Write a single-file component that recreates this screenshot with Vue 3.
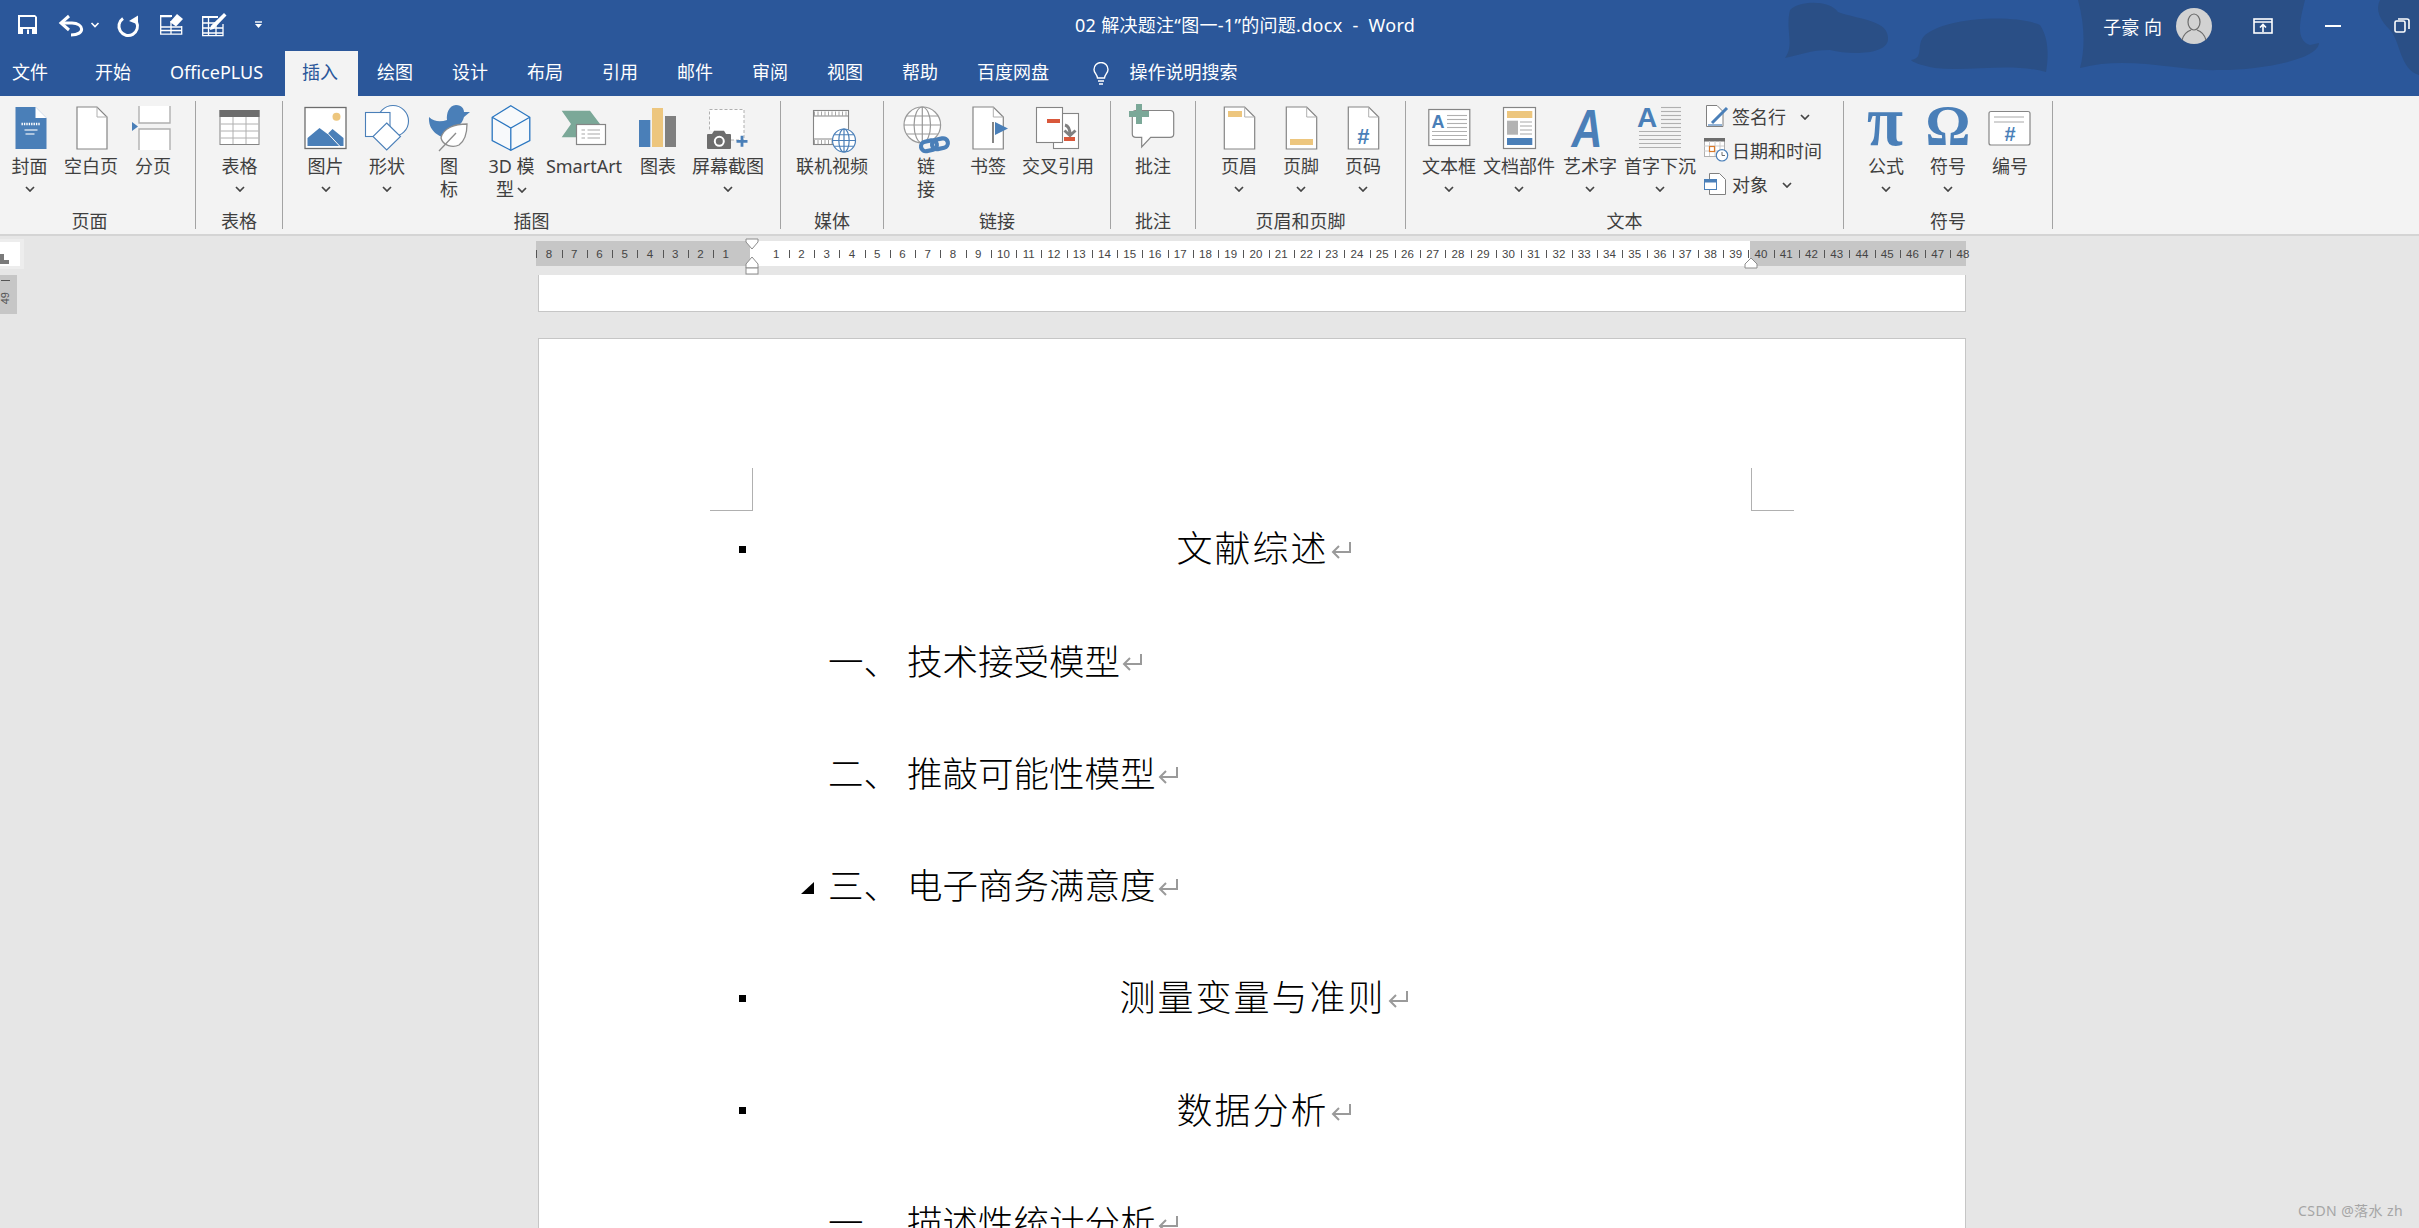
<template>
  <div class="word">
    <!-- Title bar and tabs -->
    <header class="top">
      <svg class="clouds" viewBox="0 0 2419 96" width="2419" height="96">
        <path d="M1790 10C1800 0 1830 0 1838 12C1860 20 1890 20 1888 40C1886 55 1850 55 1830 50C1810 50 1800 55 1785 58C1795 45 1785 30 1790 10Z" />
        <path d="M1925 35C1950 15 2020 15 2040 25C2050 40 2048 60 2046 72C2010 62 1970 72 1935 68C1920 65 1912 62 1911 60C1925 58 1915 45 1925 35Z" />
        <path d="M2078 0H2305C2300 20 2295 40 2310 45L2319 43C2318 60 2260 70 2220 70C2180 72 2130 55 2080 68C2085 50 2085 25 2078 0Z" />
        <path d="M2380 0H2419V75C2400 70 2400 40 2390 30C2380 20 2375 10 2380 0Z" />
      </svg>
      <div class="titlebar">
        <svg class="qat" viewBox="0 0 280 51" width="280" height="51" fill="none" stroke="#fff">
          <path d="M18 15H35L37 17V34H18Z" fill="#fff" stroke="none" />
          <rect x="20" y="17" width="15" height="10" fill="#2b579a" stroke="none" />
          <rect x="23" y="29" width="9" height="5" fill="#2b579a" stroke="none" />
          <rect x="27" y="29.5" width="2" height="4.5" fill="#fff" stroke="none" />
          <path d="M61 23H72C84 23 86 35 71 35" stroke-width="3" />
          <path d="M69 16L61 23L69 30" stroke-width="3" />
          <path d="M91.5 23L95 26.5L98.5 23" stroke-width="1.6" />
          <path d="M123 18.5A9.3 9.3 0 1 0 136.5 22" stroke-width="3" />
          <path d="M129 21L138 15.5V24.5Z" fill="#fff" stroke="none" />
          <path d="M160.7 16.5H171M160.7 16.5V34.2H181.7V26M160.7 27H181.7M160.7 30.5H181.7M171 21V34" stroke-width="1.3" />
          <path d="M160 15H172V17H160Z" fill="#fff" stroke="none" />
          <path d="M170 22L177 14L183 19L176 26.5Z" fill="#fff" stroke="none" />
          <path d="M202.7 17V35.7H223V24M202.7 23H216M202.7 28H223M202.7 33H223M208.5 18V35M216 23V35" stroke-width="1.3" />
          <path d="M202 16H218V18H202Z" fill="#fff" stroke="none" />
          <path d="M210 30L210.8 26L224 13L226.5 15.5L213.5 29Z" fill="#fff" stroke="none" />
          <path d="M255 22H262" stroke-width="1.4" />
          <path d="M255 24H262L258.5 28Z" fill="#fff" stroke="none" />
        </svg>
        <div class="doc-title">02 解决题注“图一-1”的问题.docx&nbsp; - &nbsp;Word</div>
        <div class="account">
          <span class="user">子豪 向</span>
          <svg class="avatar" viewBox="0 0 36 36" width="36" height="36">
            <circle cx="18" cy="18" r="18" fill="#d2d2d2" />
            <ellipse cx="18" cy="14" rx="6" ry="8" fill="none" stroke="#6d6d6d" stroke-width="1.2" />
            <path d="M6 32C8 25 12 23 15 22M30 32C28 25 24 23 21 22" fill="none" stroke="#6d6d6d" stroke-width="1.2" />
          </svg>
          <svg class="win win-display" viewBox="0 0 20 16" width="20" height="16" fill="none" stroke="#fff" stroke-width="1.6">
            <rect x="1" y="1" width="18" height="14" />
            <path d="M1 4H19M10 14V7M7 9.5L10 6.5L13 9.5" />
          </svg>
          <span class="win-min"></span>
          <svg class="win win-restore" viewBox="0 0 16 15" width="16" height="15" fill="none" stroke="#fff" stroke-width="1.6">
            <rect x="1" y="3" width="10" height="11" rx="1.5" />
            <path d="M4 1H13C14.5 1 15 2 15 3V11" />
          </svg>
        </div>
      </div>
      <nav class="tabs">
        <span v-for="t in tabs" :key="t" class="tab" :class="{ active: t === '插入', first: t === '文件' }">{{ t }}</span>
        <svg class="bulb" viewBox="0 0 20 24" width="20" height="24" fill="none" stroke="#fff" stroke-width="1.4">
          <path d="M6.5 16C6 12 3 11 3 7.5A7 7 0 0 1 17 7.5C17 11 14 12 13.5 16Z" />
          <path d="M7 19H13M8 22H12" />
        </svg>
        <span class="search">操作说明搜索</span>
      </nav>
    </header>

    <!-- Ribbon -->
    <section class="ribbon">
      <div
        v-for="g in layoutGroups"
        :key="g.name"
        class="group"
        :style="{ width: g.width + 'px' }"
      >
        <div class="btns">
          <div
            v-for="b in g.btns"
            :key="b.icon"
            class="btn"
            :style="{ width: b.w + 'px', marginLeft: b.ml + 'px' }"
          >
            <svg class="icon" :viewBox="`${b.cx - 34} 103 68 52`" width="68" height="52" v-html="icons[b.icon]"></svg>
            <div class="label">
              <div v-for="(line, i) in b.label" :key="i">
                {{ line }}<svg v-if="b.drop === 'inline' && i === b.label.length - 1" class="chev inline" viewBox="0 0 10 6" width="10" height="6"><path d="M1 1L5 5L9 1" /></svg>
              </div>
              <div v-if="b.drop === 'below'" class="chev-row">
                <svg class="chev" viewBox="0 0 10 6" width="10" height="6"><path d="M1 1L5 5L9 1" /></svg>
              </div>
            </div>
          </div>
          <div v-if="g.small" class="small-col">
            <div v-for="s in g.small" :key="s.text" class="small-row">
              <svg :viewBox="s.box" width="26" height="26" v-html="icons[s.icon]"></svg>
              <span class="small-text">{{ s.text }}</span>
              <svg v-if="s.gap" class="chev" :style="{ marginLeft: s.gap + 'px' }" viewBox="0 0 10 6" width="10" height="6"><path d="M1 1L5 5L9 1" /></svg>
            </div>
          </div>
        </div>
        <div class="group-label" :class="{ shift: g.name === '页面' }">{{ g.name }}</div>
      </div>
    </section>

    <!-- Document area -->
    <main class="workspace">
      <div class="corner">
        <span class="corner-in"><i class="tabstop-v"></i><i class="tabstop-h"></i></span>
      </div>
      <div class="vruler"><i class="vtick"></i><span class="vnum">49</span></div>

      <div class="ruler">
        <div class="ruler-dark left"></div>
        <div class="ruler-light"></div>
        <div class="ruler-dark right"></div>
        <span v-for="n in rulerNums" :key="n.key" class="rnum" :style="{ left: n.x + 'px' }">{{ n.text }}</span>
        <i v-for="x in rulerTicks" :key="x" class="rtick" :style="{ left: x + 'px' }"></i>
        <svg class="indent" viewBox="0 0 14 37" width="14" height="37" fill="#fff" stroke="#8c8c8c">
          <path d="M1 1H13V4L7 11L1 4Z" />
          <path d="M7 19L13 26V30H1V26Z" />
          <rect x="1" y="30" width="12" height="6" />
        </svg>
        <svg class="indent-r" viewBox="0 0 14 12" width="14" height="12" fill="#fff" stroke="#8c8c8c">
          <path d="M7 1L13 7V11H1V7Z" />
        </svg>
      </div>

      <div class="page-end"></div>

      <article class="page">
        <i class="crop crop-l"></i>
        <i class="crop crop-r"></i>
        <div v-for="(p, i) in paragraphs" :key="i" class="para" :class="p.center ? 'centered' : 'indented'">
          <i v-if="p.center" class="bullet"></i>
          <i v-if="p.tri" class="tri"></i>
          <span v-if="p.num" class="para-num">{{ p.num }}</span>
          <span class="para-text">{{ p.text }}</span>
          <svg class="pilcrow" viewBox="0 0 22 18" width="22" height="18" fill="none" stroke="#9a9a9a" stroke-width="2">
            <path d="M20 1V11H3M9 5L3 11L9 17" />
          </svg>
        </div>
      </article>

      <div class="watermark">CSDN @落水 zh</div>
    </main>
  </div>
</template>

<script setup>
const tabs = ['文件', '开始', 'OfficePLUS', '插入', '绘图', '设计', '布局', '引用', '邮件', '审阅', '视图', '帮助', '百度网盘']

// ── Icon colours ───────────────────────────────────────
const BLUE = '#4a7fb8'
const GRAY = '#858585'
const LINE = '#b0b0b0'
const DARK = '#6d6d6d'
const YEL = '#edc67e'
const GRN = '#7ba898'
const RED = '#d9583b'

function sheet(x, y, w, h) {
  const f = 10
  return `<path d="M${x} ${y}H${x + w - f}L${x + w} ${y + f}V${y + h}H${x}Z" fill="#fff" stroke="${GRAY}" stroke-width="1.2"/>` +
    `<path d="M${x + w - f} ${y}V${y + f}H${x + w}" fill="none" stroke="${LINE}"/>`
}
function hlines(x1, x2, ys, color = LINE) {
  return ys.map(y => `<path d="M${x1} ${y}H${x2}" stroke="${color}" stroke-width="1.1"/>`).join('')
}
function globe(cx, cy, rx, ry, color) {
  return `<g fill="#fff" stroke="${color}" stroke-width="1.2"><ellipse cx="${cx}" cy="${cy}" rx="${rx}" ry="${ry}"/>` +
    `<ellipse cx="${cx}" cy="${cy}" rx="${rx * 0.45}" ry="${ry}" fill="none"/>` +
    `<path d="M${cx} ${cy - ry}V${cy + ry}M${cx - rx} ${cy}H${cx + rx}M${cx - rx * 0.85} ${cy - ry * 0.5}H${cx + rx * 0.85}M${cx - rx * 0.85} ${cy + ry * 0.5}H${cx + rx * 0.85}" fill="none"/></g>`
}

const icons = {
  cover: `<path d="M15 107H35L46 118V149H15Z" fill="${BLUE}"/><path d="M35 107L46 118H35Z" fill="#fff"/>` +
    `<path d="M21 124H40" stroke="#fff" stroke-width="2.4" stroke-dasharray="1.4 1"/>` + hlines(24, 37, [130], '#fff') + hlines(25, 34, [134], '#fff'),
  blank: sheet(77, 107, 30, 42),
  pagebreak: `<path d="M139 106V123H170V106" fill="#fff" stroke="${LINE}" stroke-width="1.4"/><path d="M139 150V129H170V150" fill="#fff" stroke="${LINE}" stroke-width="1.4"/><path d="M132 122L138 126.5L132 131Z" fill="${BLUE}"/>`,
  table: `<rect x="219.5" y="110.5" width="39" height="34" fill="#fff" stroke="${GRAY}"/><rect x="219" y="110" width="40" height="7" fill="${DARK}"/>` +
    `<path d="M232.5 117V144M245.5 117V144M220 124H258M220 131H258M220 138H258" stroke="${LINE}"/>`,
  picture: `<rect x="304.5" y="107.5" width="41" height="41" fill="#fff" stroke="${DARK}" stroke-width="1.3"/><circle cx="336" cy="116.7" r="4" fill="${YEL}"/>` +
    `<path d="M307 146V138L319 128L327 134L332 129L343 138V146Z" fill="${BLUE}"/><path d="M326 132L340 147" stroke="#fff"/>`,
  shape: `<g fill="#fff" stroke="${BLUE}" stroke-width="1.1"><circle cx="393" cy="121" r="15.5"/><rect x="365.5" y="112.5" width="24.5" height="24"/><path d="M386.7 123L400.5 136.5L386.7 150L373 136.5Z"/></g>`,
  bird: `<path d="M429 117C434 122 441 122 447 120C446 114 449 105 456 105C462 105 464 109 464 112L470 112L464 117C463 121 461 124 458 126L447 138C438 137 428 130 429 117Z" fill="${BLUE}"/>` +
    `<path d="M467 124C455 124 443 128 441 138C443 146 453 148 459 145C466 140 467 132 467 124Z" fill="#fff" stroke="#8c8c8c" stroke-width="1.3"/><path d="M439 151L456 133" stroke="#8c8c8c" stroke-width="1.3"/>`,
  model: `<path d="M510.3 105.7L529.3 117.3V140.7L510.3 150.3L491.7 140.7V117.3Z" fill="#f7f9fb" stroke="#2a76c0" stroke-width="1.3"/><path d="M491.7 117.3L510.3 128L529.3 117.3M510.3 128V150.3" fill="none" stroke="#2a76c0" stroke-width="1.3"/>`,
  smartart: `<path d="M561.7 110.7H590L600 124L590 137.3H561.7L571 124Z" fill="${GRN}"/><rect x="576.5" y="124.5" width="29" height="20" fill="#fff" stroke="${GRAY}" stroke-width="1.2"/>` +
    hlines(581.5, 585, [130, 134, 138]) + hlines(587.5, 600, [130, 134, 138]),
  chart: `<rect x="639" y="120" width="11.3" height="27" fill="${BLUE}"/><rect x="652" y="108" width="11" height="39" fill="${YEL}"/><rect x="665" y="116" width="11" height="31" fill="#7f7f7f"/>`,
  screenshot: `<path d="M731 140H744V109.5H709.5V130" fill="#fff" stroke="${LINE}" stroke-dasharray="3 2"/>` +
    `<path d="M708 134H712L714 130.7H724L726 134H730Q731 134 731 135V148Q731 149 730 149H708Q707 149 707 148V135Q707 134 708 134Z" fill="${DARK}"/><circle cx="719.3" cy="141.3" r="4.5" fill="none" stroke="#fff" stroke-width="2"/><path d="M742 135.8V146.8M736.5 141.3H747.5" stroke="${BLUE}" stroke-width="2.8"/>`,
  video: `<rect x="813.5" y="110.5" width="35" height="34" fill="#fff" stroke="${GRAY}" stroke-width="1.1"/><path d="M814 116H848M814 139H848" stroke="${GRAY}"/><path d="M814 113.5H848M814 142H848" stroke="${DARK}" stroke-width="4" stroke-dasharray="1 2.5" opacity=".6"/>` + globe(844, 140.5, 11.5, 11.5, BLUE),
  link: globe(922.3, 125, 18.3, 18, '#999') + `<g fill="none" stroke="${BLUE}" stroke-width="4.2"><rect x="921" y="141" width="16" height="9.5" rx="4.7" transform="rotate(-12 929 146)"/><rect x="932" y="139" width="16" height="9.5" rx="4.7" transform="rotate(-12 940 144)"/></g>`,
  bookmark: sheet(973, 107, 30.3, 42) + `<path d="M993 122V143" stroke="${GRAY}" stroke-width="2"/><path d="M995 122L1008 128.5L995 135Z" fill="${BLUE}"/>`,
  crossref: `<rect x="1053.5" y="113.5" width="25" height="35" fill="#fff" stroke="${GRAY}" stroke-width="1.1"/><rect x="1036.5" y="107.5" width="26" height="35" fill="#fff" stroke="${GRAY}" stroke-width="1.1"/>` +
    `<rect x="1047" y="119" width="13" height="4" fill="${RED}"/><rect x="1064" y="137" width="11" height="4" fill="${RED}"/><path d="M1065 125C1069 126 1070 129 1070 135M1064.5 130.5L1070 135.5L1075.5 130.5" fill="none" stroke="#808080" stroke-width="3"/>`,
  comment: `<path d="M1136 110.5H1170Q1173.7 110.5 1173.7 114V134Q1173.7 137.3 1170 137.3H1150.7L1141.7 147V137.3H1136Q1132.3 137.3 1132.3 134V114Q1132.3 110.5 1136 110.5Z" fill="#fff" stroke="${GRAY}" stroke-width="1.2"/><path d="M1139 104V124M1129 114H1149" stroke="${GRN}" stroke-width="6"/>`,
  header: sheet(1224.3, 107, 30.4, 42) + `<rect x="1228" y="111" width="14" height="6" fill="${YEL}"/>`,
  footer: sheet(1286.3, 107, 30.4, 42) + `<rect x="1290" y="139" width="23" height="6" fill="${YEL}"/>`,
  pagenum: sheet(1348.3, 107, 30.4, 42) + `<text x="1363.3" y="143.5" text-anchor="middle" font-size="22" font-weight="700" font-family="Liberation Sans" fill="${BLUE}">#</text>`,
  textbox: `<rect x="1428.8" y="109.5" width="41" height="36" fill="#fff" stroke="${GRAY}" stroke-width="1.2"/><text x="1438" y="128" text-anchor="middle" font-size="18" font-weight="700" font-family="Liberation Sans" fill="${BLUE}">A</text>` + hlines(1447, 1467, [115.5, 119.5, 123.5, 127.5]) + hlines(1432, 1467, [131.5, 135.5, 139.5]),
  docparts: `<rect x="1503.5" y="107.5" width="32" height="41" fill="#fff" stroke="${GRAY}" stroke-width="1.2"/><rect x="1507" y="111" width="25.3" height="7" fill="${YEL}"/><rect x="1507" y="120.7" width="11" height="14" fill="#b3b3b3"/><rect x="1507" y="138" width="25.3" height="7" fill="${BLUE}"/>` + hlines(1520, 1532, [122, 126, 130, 134]),
  wordart: `<text x="1587" y="147" text-anchor="middle" font-size="53" font-weight="700" font-style="italic" textLength="31" lengthAdjust="spacingAndGlyphs" font-family="Liberation Sans" fill="${BLUE}">A</text>`,
  dropcap: `<text x="1647" y="127.3" text-anchor="middle" font-size="28" font-weight="700" font-family="Liberation Sans" fill="${BLUE}">A</text>` + hlines(1661, 1681, [107.5, 111.5, 115.5, 119.5, 123.5, 127.5]) + hlines(1639, 1681, [131.5, 135.5, 139.5, 143.5, 147.5]),
  sign: `<path d="M1706.5 105.5H1717L1723 111.5V126.5H1706.5Z" fill="#fff" stroke="#808080"/><path d="M1712 123L1727 108" stroke="${BLUE}" stroke-width="3"/><path d="M1708 125H1722" stroke="${BLUE}" stroke-width="1.2"/>`,
  date: `<rect x="1704.5" y="138.5" width="20" height="18" fill="#fff" stroke="${LINE}"/><rect x="1704" y="138" width="21" height="3.5" fill="${DARK}"/><path d="M1709.5 141V156M1715 141V156M1720 141V156M1704 146H1724M1704 151H1724" stroke="#ccc"/><rect x="1709.5" y="146.5" width="5" height="5" fill="#fff" stroke="#d97a2b" stroke-width="1.2"/><circle cx="1722" cy="155.3" r="5.7" fill="#fff" stroke="${BLUE}" stroke-width="1.2"/><path d="M1722 152V155.5H1725" fill="none" stroke="${DARK}"/>`,
  object: `<path d="M1709.5 173.5H1719.5L1725.5 179.5V194.5H1709.5Z" fill="#fff" stroke="#808080"/><rect x="1704.5" y="179.5" width="12" height="10" fill="#fff" stroke="${BLUE}"/><rect x="1704" y="179" width="13" height="3.5" fill="${BLUE}"/>`,
  formula: `<text x="1885" y="145" text-anchor="middle" font-size="72" textLength="36" lengthAdjust="spacingAndGlyphs" font-family="Liberation Serif" font-weight="700" fill="${BLUE}">π</text>`,
  symbol: `<text x="1948" y="145" text-anchor="middle" font-size="56" font-family="Liberation Serif" font-weight="700" fill="${BLUE}">Ω</text>`,
  number: `<rect x="1989" y="111.5" width="41" height="33.5" rx="2" fill="#fff" stroke="${GRAY}" stroke-width="1.2"/>` + hlines(1994, 2024, [117, 122]) + `<text x="2010" y="141" text-anchor="middle" font-size="20" font-weight="700" font-family="Liberation Sans" fill="${BLUE}">#</text>`,
}

// ── Ribbon data ────────────────────────────────────────
const groups = [
  { name: '页面', end: 196, btns: [
    { cx: 29.5, w: 60, label: ['封面'], drop: 'below', icon: 'cover' },
    { cx: 91, w: 60, label: ['空白页'], icon: 'blank' },
    { cx: 153, w: 60, label: ['分页'], icon: 'pagebreak' },
  ] },
  { name: '表格', end: 283, btns: [{ cx: 239.5, w: 60, label: ['表格'], drop: 'below', icon: 'table' }] },
  { name: '插图', end: 781, btns: [
    { cx: 325.5, w: 60, label: ['图片'], drop: 'below', icon: 'picture' },
    { cx: 387, w: 60, label: ['形状'], drop: 'below', icon: 'shape' },
    { cx: 449, w: 40, label: ['图', '标'], icon: 'bird' },
    { cx: 511.5, w: 52, label: ['3D 模', '型'], drop: 'inline', icon: 'model' },
    { cx: 584, w: 78, label: ['SmartArt'], icon: 'smartart' },
    { cx: 658, w: 60, label: ['图表'], icon: 'chart' },
    { cx: 728, w: 76, label: ['屏幕截图'], drop: 'below', icon: 'screenshot' },
  ] },
  { name: '媒体', end: 884, btns: [{ cx: 832, w: 76, label: ['联机视频'], icon: 'video' }] },
  { name: '链接', end: 1111, btns: [
    { cx: 926, w: 40, label: ['链', '接'], icon: 'link' },
    { cx: 988, w: 60, label: ['书签'], icon: 'bookmark' },
    { cx: 1058, w: 76, label: ['交叉引用'], icon: 'crossref' },
  ] },
  { name: '批注', end: 1196, btns: [{ cx: 1153, w: 60, label: ['批注'], icon: 'comment' }] },
  { name: '页眉和页脚', end: 1406, btns: [
    { cx: 1239, w: 60, label: ['页眉'], drop: 'below', icon: 'header' },
    { cx: 1301, w: 60, label: ['页脚'], drop: 'below', icon: 'footer' },
    { cx: 1363, w: 60, label: ['页码'], drop: 'below', icon: 'pagenum' },
  ] },
  { name: '文本', end: 1844, btns: [
    { cx: 1449, w: 56, label: ['文本框'], drop: 'below', icon: 'textbox' },
    { cx: 1519, w: 74, label: ['文档部件'], drop: 'below', icon: 'docparts' },
    { cx: 1590, w: 56, label: ['艺术字'], drop: 'below', icon: 'wordart' },
    { cx: 1660, w: 74, label: ['首字下沉'], drop: 'below', icon: 'dropcap' },
  ], small: [
    { text: '签名行', icon: 'sign', box: '1703 104 26 26', gap: 14 },
    { text: '日期和时间', icon: 'date', box: '1703 138 26 26' },
    { text: '对象', icon: 'object', box: '1703 172 26 26', gap: 14 },
  ] },
  { name: '符号', end: 2053, btns: [
    { cx: 1886, w: 60, label: ['公式'], drop: 'below', icon: 'formula' },
    { cx: 1948, w: 60, label: ['符号'], drop: 'below', icon: 'symbol' },
    { cx: 2010, w: 60, label: ['编号'], icon: 'number' },
  ] },
]

let groupStart = 0
const layoutGroups = groups.map(g => {
  let right = groupStart
  const btns = g.btns.map(b => {
    const left = b.cx - b.w / 2
    const ml = left - right
    right = left + b.w
    return { ...b, ml }
  })
  const out = { ...g, btns, width: g.end - groupStart }
  groupStart = g.end
  return out
})

// ── Ruler ──────────────────────────────────────────────
const ZERO = 215
const UNIT = 25.25
const rulerNums = []
const rulerTicks = []
for (let n = 8; n >= 1; n--) rulerNums.push({ key: 'l' + n, text: n, x: ZERO - n * UNIT })
for (let n = 1; n <= 48; n++) rulerNums.push({ key: 'r' + n, text: n, x: ZERO + n * UNIT })
for (let n = -9; n <= 47; n++) {
  if (n !== -1 && n !== 0) rulerTicks.push(ZERO + (n + 0.5) * UNIT)
}

// ── Document ───────────────────────────────────────────
const paragraphs = [
  { text: '文献综述', center: true },
  { num: '一、', text: '技术接受模型' },
  { num: '二、', text: '推敲可能性模型' },
  { num: '三、', text: '电子商务满意度', tri: true },
  { text: '测量变量与准则', center: true },
  { text: '数据分析', center: true },
  { num: '一、', text: '描述性统计分析' },
]
</script>

<style scoped>
.word {
  width: 2419px;
  height: 1228px;
  overflow: hidden;
  font-family: "Noto Sans", "Noto Sans CJK SC", sans-serif;
  font-size: 18px;
  color: #3f3f3f;
  background: #e6e6e6;
  display: flex;
  flex-direction: column;
}

/* title bar */
.top {
  position: relative;
  height: 96px;
  background: #2b579a;
  color: #fff;
  flex: none;
}
.clouds {
  position: absolute;
  left: 0;
  top: 0;
  fill: #2a4f86;
}
.titlebar {
  position: relative;
  height: 51px;
  display: flex;
  align-items: center;
}
.qat {
  width: 280px;
  flex: none;
}
.doc-title {
  margin-left: 795px;
  line-height: 51px;
  letter-spacing: 0.3px;
  white-space: nowrap;
}
.account {
  margin-left: auto;
  display: flex;
  align-items: center;
  padding-right: 9px;
}
.user { margin-right: 14px; }
.win-display { margin-left: 41px; }
.win-min {
  width: 16px;
  height: 2px;
  background: #fff;
  margin-left: 52px;
}
.win-restore { margin-left: 53px; }

.tabs {
  position: relative;
  height: 45px;
  display: flex;
  align-items: center;
}
.tab {
  height: 45px;
  line-height: 42px;
  padding: 0 19.5px;
  white-space: nowrap;
}
.tab.first { padding: 0 27.5px 0 12px; }
.tab.active {
  margin-left: 2px;
  padding: 0 19.5px 0 17.5px;
  background: #f3f3f3;
  color: #2b579a;
}
.bulb { margin-left: 22px; }
.search {
  margin-left: 19px;
  line-height: 42px;
  height: 45px;
}

/* ribbon */
.ribbon {
  height: 138px;
  flex: none;
  display: flex;
  background: #f3f3f3;
  border-bottom: 2px solid #d4d4d4;
}
.group {
  height: 128px;
  margin-top: 5px;
  flex: none;
  display: flex;
  flex-direction: column;
  border-right: 1px solid #a3a3a3;
  box-sizing: border-box;
}
.btns {
  display: flex;
  padding-top: 2px;
  height: 0;
  flex: 1;
}
.btn {
  flex: none;
  display: flex;
  flex-direction: column;
  align-items: center;
}
.icon {
  flex: none;
  display: block;
  overflow: visible;
}
.label {
  line-height: 23px;
  text-align: center;
  white-space: nowrap;
}
.chev {
  fill: none;
  stroke: #444;
  stroke-width: 1.7;
}
.chev.inline { margin-left: 3px; vertical-align: 3px; }
.chev-row {
  height: 23px;
  display: flex;
  align-items: center;
  justify-content: center;
  padding-bottom: 1px;
  box-sizing: border-box;
}
.small-col {
  margin-left: 6px;
  margin-top: -3px;
  display: flex;
  flex-direction: column;
}
.small-row {
  height: 34px;
  display: flex;
  align-items: center;
  white-space: nowrap;
  line-height: 32px;
}
.small-text { margin-left: 3px; }
.group-label {
  height: 14px;
  line-height: 14px;
  margin-bottom: 1px;
  text-align: center;
  white-space: nowrap;
}
.group-label.shift { padding-right: 16px; }

/* workspace */
.workspace {
  position: relative;
  flex: 1;
  min-height: 0;
  padding: 5px 452px 0 536px;
  overflow: hidden;
}
.corner {
  position: absolute;
  left: 0;
  top: 3px;
  width: 24px;
  height: 30px;
  background: #ededed;
  box-sizing: border-box;
  padding: 3px 4px 3px 0;
}
.corner-in {
  position: relative;
  display: block;
  height: 100%;
  background: #fff;
}
.tabstop-v {
  position: absolute;
  left: 0;
  top: 12px;
  width: 4px;
  height: 10px;
  background: #7a7a7a;
}
.tabstop-h {
  position: absolute;
  left: 0;
  top: 18px;
  width: 9px;
  height: 4px;
  background: #7a7a7a;
}
.vruler {
  position: absolute;
  left: 0;
  top: 39px;
  width: 17px;
  height: 39px;
  background: #c6c6c6;
}
.vtick {
  position: absolute;
  left: 1px;
  top: 5px;
  width: 9px;
  height: 1px;
  background: #555;
}
.vnum {
  position: absolute;
  left: 0;
  top: 17px;
  font-size: 11px;
  line-height: 11px;
  font-family: "Liberation Sans", sans-serif;
  color: #555;
  writing-mode: vertical-rl;
  transform: rotate(180deg);
}
.ruler {
  position: relative;
  width: 1430px;
  height: 25px;
  display: flex;
  font-family: "Liberation Sans", sans-serif;
  font-size: 11.5px;
  color: #444;
  margin-bottom: 9px;
}
.ruler-dark { background: #c6c6c6; flex: none; }
.ruler-dark.left { width: 214px; }
.ruler-dark.right { width: 216px; }
.ruler-light { flex: 1; background: #fff; }
.rnum {
  position: absolute;
  top: 0;
  line-height: 26px;
  transform: translateX(-50%);
}
.rtick {
  position: absolute;
  top: 9px;
  width: 1px;
  height: 8px;
  background: #555;
}
.indent {
  position: absolute;
  left: 209px;
  top: -3px;
}
.indent-r {
  position: absolute;
  left: 1208px;
  top: 16px;
}
.page-end {
  margin-left: 2px;
  height: 37px;
  width: 1428px;
  box-sizing: border-box;
  background: #fff;
  border: 1px solid #c6c6c6;
  border-top: none;
  margin-bottom: 26px;
}
.page {
  position: relative;
  margin-left: 2px;
  width: 1428px;
  box-sizing: border-box;
  background: #fff;
  border: 1px solid #c6c6c6;
  border-bottom: none;
  padding-top: 154px;
  height: 1000px;
  color: #000;
}
.crop {
  position: absolute;
  top: 129px;
  width: 43px;
  height: 43px;
  box-sizing: border-box;
  border-bottom: 1px solid #b0b0b0;
}
.crop-l {
  left: 171px;
  border-right: 1px solid #b0b0b0;
}
.crop-r {
  left: 1212px;
  border-left: 1px solid #b0b0b0;
}
.para {
  position: relative;
  height: 112.3px;
  display: flex;
  align-items: center;
  font-size: 36px;
  font-weight: 300;
  line-height: 1;
}
.indented {
  padding-left: 289px;
  font-size: 35.5px;
}
.centered {
  justify-content: center;
  padding: 0 214px 0 238px;
  letter-spacing: 2px;
}
.para-num {
  width: 79px;
  flex: none;
  white-space: nowrap;
}
.para-text { white-space: nowrap; }
.pilcrow {
  flex: none;
  margin-left: 1px;
  margin-top: 2px;
}
.bullet {
  position: absolute;
  left: 200px;
  top: 53px;
  width: 7px;
  height: 7px;
  background: #000;
}
.tri {
  position: absolute;
  left: 262px;
  top: 52px;
  width: 0;
  height: 0;
  border-left: 13px solid transparent;
  border-bottom: 12px solid #000;
}
.watermark {
  position: absolute;
  right: 16px;
  bottom: 8px;
  font-size: 14px;
  letter-spacing: 0.4px;
  color: #a5a5a5;
}
</style>

<style>
html, body { margin: 0; background: #e6e6e6; overflow: hidden; }
</style>
